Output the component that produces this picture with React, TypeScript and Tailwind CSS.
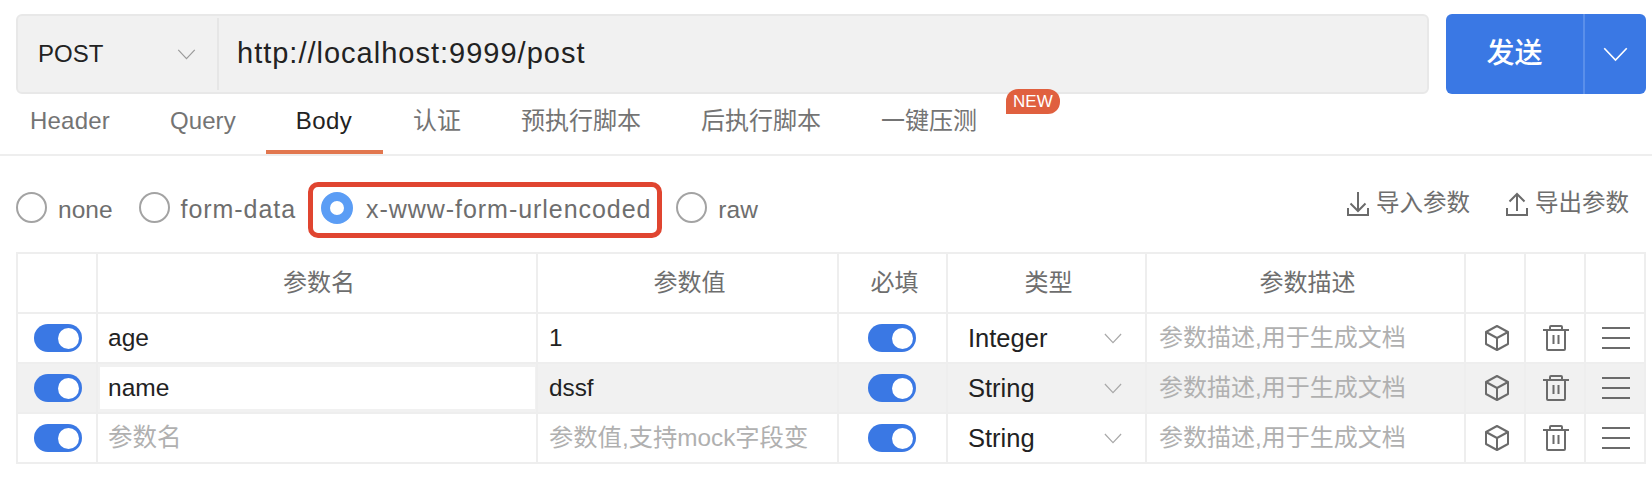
import { type ReactNode } from "react";

const FONT = "font-['Liberation_Sans','Noto_Sans_CJK_SC',sans-serif]";
const COLS = "grid grid-cols-[80px_440px_301px_109px_199px_319px_60px_60px_58px]";
const CELL = "flex min-w-0 items-center border-r-2 border-[#eeeeee] last:border-r-0";

type Row = {
  name: string;
  value: string;
  type: string;
  active?: boolean;
};

const rows: Row[] = [
  { name: "age", value: "1", type: "Integer" },
  { name: "name", value: "dssf", type: "String", active: true },
  { name: "", value: "", type: "String" },
];

const tabs = [
  { label: "Header", className: "px-[30px] tracking-[0.2px] text-[#747474]" },
  { label: "Query", className: "px-[30px] tracking-[0.1px] text-[#747474]" },
  { label: "Body", className: "pl-[30px] pr-[31px] tracking-[0.4px] border-[#e2774f] text-[#222222]" },
  { label: "认证", className: "px-[30px] text-[#747474]" },
  { label: "预执行脚本", className: "px-[30px] text-[#747474]" },
  { label: "后执行脚本", className: "px-[30px] text-[#747474]" },
  { label: "一键压测", className: "px-[30px] text-[#747474]" },
];

function Chevron({ className }: { className: string }) {
  return (
    <svg viewBox="0 0 20 12" fill="none" stroke="currentColor" strokeWidth="1.3" className={className}>
      <path d="M1 1 L10 10.5 L19 1" />
    </svg>
  );
}

function Radio({ label, checked, wide }: { label: string; checked?: boolean; wide?: boolean }) {
  return (
    <span className={`flex items-center ${checked ? "gap-[13px]" : "gap-[11px]"}`}>
      {checked ? (
        <span className="mb-[5px] h-[32px] w-[32px] rounded-full border-[9px] border-[#5b9df5] bg-white" />
      ) : (
        <span className="mb-[5px] h-[31px] w-[31px] rounded-full border-2 border-[#a3a3a3] bg-white" />
      )}
      <span className={`text-[#6e6e6e] ${wide ? "text-[25px] tracking-[0.95px]" : "text-[24.5px]"}`}>{label}</span>
    </span>
  );
}

function Toggle() {
  return (
    <span className="flex h-[28px] w-[48px] items-center justify-end rounded-full bg-[#3a78e4] pr-[3px]">
      <span className="h-[21px] w-[21px] rounded-full bg-white" />
    </span>
  );
}

function TransferLink({ label, up }: { label: string; up?: boolean }) {
  return (
    <span className="flex items-center gap-[7px] text-[23.5px] text-[#6e6e6e]">
      <svg viewBox="0 0 22 24" fill="none" stroke="#6b6b6b" strokeWidth="2" className="h-[24px] w-[22px]">
        <path d="M1 16 V23 H21 V16" />
        {up ? <path d="M11 19 V2 M3.5 9.5 L11 2 L18.5 9.5" /> : <path d="M11 0 V19 M3.5 11.5 L11 19 L18.5 11.5" />}
      </svg>
      {label}
    </span>
  );
}

function HeaderCell({ children }: { children?: ReactNode }) {
  return <div className={`${CELL} justify-center pl-[4px] text-[24px] text-[#6e6e6e]`}>{children}</div>;
}

function CubeIcon() {
  return (
    <svg viewBox="0 0 24 26" fill="none" stroke="#6b6b6b" strokeWidth="2" strokeLinejoin="round" className="h-[26px] w-[24px]">
      <path d="M12 1 L23 7 V19 L12 25 L1 19 V7 Z" />
      <path d="M1 7 L12 13 L23 7 M12 13 V25" />
    </svg>
  );
}

function TrashIcon() {
  return (
    <svg viewBox="0 0 26 26" fill="none" stroke="#6b6b6b" strokeWidth="2" strokeLinejoin="round" className="h-[26px] w-[26px]">
      <path d="M0 5 H26" />
      <path d="M7 5 V2 Q7 1 8 1 H18 Q19 1 19 2 V5" />
      <path d="M4 5 V24 Q4 25 5 25 H21 Q22 25 22 24 V5" />
      <path d="M10.5 10 V19 M15.5 10 V19" />
    </svg>
  );
}

function MenuIcon() {
  return (
    <svg viewBox="0 0 28 22" fill="none" stroke="#6b6b6b" strokeWidth="2" className="h-[22px] w-[28px]">
      <path d="M0 1 H28 M0 11 H28 M0 21 H28" />
    </svg>
  );
}

export default function App() {
  return (
    <div className={`${FONT} h-[488px] w-[1652px] overflow-hidden bg-white pl-[16px] pt-[14px]`}>
      <div className="flex h-[80px] w-[1630px] gap-[17px]">
        <div className="flex w-[1413px] rounded-[6px] border-2 border-[#e8e8e8] bg-[#f1f1f1]">
          <div className="my-[2px] flex w-[201px] items-center justify-between border-r-2 border-[#e6e6e6] pl-[20px] pr-[21px]">
            <span className="text-[24px] text-[#222222]">POST</span>
            <Chevron className="h-[11px] w-[19px] text-[#9a9a9a]" />
          </div>
          <div className="flex items-center pl-[18px] text-[29px] tracking-[1px] text-[#222222]">http://localhost:9999/post</div>
        </div>
        <div className="flex w-[200px] rounded-[6px] bg-[#3a78e4] text-white">
          <div className="flex w-[137px] items-center justify-center text-[28px] font-medium">发送</div>
          <div className="flex flex-1 items-center justify-center border-l-2 border-[#5a8fea]">
            <Chevron className="h-[15px] w-[25px]" />
          </div>
        </div>
      </div>

      <div className="-ml-[16px] flex h-[62px] w-[1652px] border-b-2 border-[#eeeeee]">
        {tabs.map((tab) => (
          <div
            key={tab.label}
            className={`relative flex h-[60px] items-center border-b-4 pb-[3px] text-[24px] ${tab.label === "Body" ? "" : "border-transparent"} ${tab.className}`}
          >
            {tab.label}
            {tab.label === "一键压测" ? (
              <span className="absolute left-[155px] top-[-5px] rounded-[12px] rounded-bl-none bg-[#e0603f] px-[7px] py-[2px] text-[17px] leading-[21px] text-white">
                NEW
              </span>
            ) : null}
          </div>
        ))}
      </div>

      <div className="flex h-[96px] w-[1630px] items-start justify-between pr-[17px] pt-[26px]">
        <div className="flex h-[56px] items-center">
          <Radio label="none" />
          <div className="ml-[26px]">
            <Radio label="form-data" wide />
          </div>
          <div className="ml-[12px] flex h-[56px] items-center rounded-[10px] border-[5px] border-[#e04530] pl-[8px] pr-[6px]">
            <Radio label="x-www-form-urlencoded" checked wide />
          </div>
          <div className="ml-[14px]">
            <Radio label="raw" />
          </div>
        </div>
        <div className="flex gap-[36px] pt-[4px]">
          <TransferLink label="导入参数" />
          <TransferLink label="导出参数" up />
        </div>
      </div>

      <div className="w-[1630px] border-2 border-[#eeeeee]">
        <div className={`${COLS} h-[58px]`}>
          <HeaderCell />
          <HeaderCell>参数名</HeaderCell>
          <HeaderCell>参数值</HeaderCell>
          <HeaderCell>必填</HeaderCell>
          <HeaderCell>类型</HeaderCell>
          <HeaderCell>参数描述</HeaderCell>
          <HeaderCell />
          <HeaderCell />
          <HeaderCell />
        </div>
        {rows.map((row, index) => (
          <div
            key={index}
            className={`${COLS} h-[50px] border-t-2 border-[#eeeeee] ${row.active ? "bg-[#f1f1f1]" : "bg-white"}`}
          >
            <div className={`${CELL} justify-center pl-[1px]`}>
              <Toggle />
            </div>
            <div className={`${CELL} py-[3px] pl-[2px] pr-[1px]`}>
              <div className={`flex h-full w-full items-center pl-[8px] text-[24.5px] ${row.active ? "bg-white" : ""} ${row.name ? "text-[#222222]" : "text-[#b0b0b0]"}`}>
                {row.name || "参数名"}
              </div>
            </div>
            <div className={`${CELL} whitespace-nowrap pl-[11px] text-[24.3px] ${row.value ? "text-[#222222]" : "text-[#b0b0b0]"}`}>
              {row.value || "参数值,支持mock字段变"}
            </div>
            <div className={`${CELL} justify-center pr-[2px]`}>
              <Toggle />
            </div>
            <div className={`${CELL} justify-between pl-[20px] pr-[23px] text-[25.5px] text-[#222222]`}>
              {row.type}
              <Chevron className="h-[11px] w-[18px] text-[#a8a8a8]" />
            </div>
            <div className={`${CELL} pl-[12px] text-[24px] text-[#b0b0b0]`}>参数描述,用于生成文档</div>
            <div className={`${CELL} justify-center pl-[4px]`}>
              <CubeIcon />
            </div>
            <div className={`${CELL} justify-center pl-[2px]`}>
              <TrashIcon />
            </div>
            <div className={`${CELL} justify-center pl-[1px]`}>
              <MenuIcon />
            </div>
          </div>
        ))}
      </div>
    </div>
  );
}
